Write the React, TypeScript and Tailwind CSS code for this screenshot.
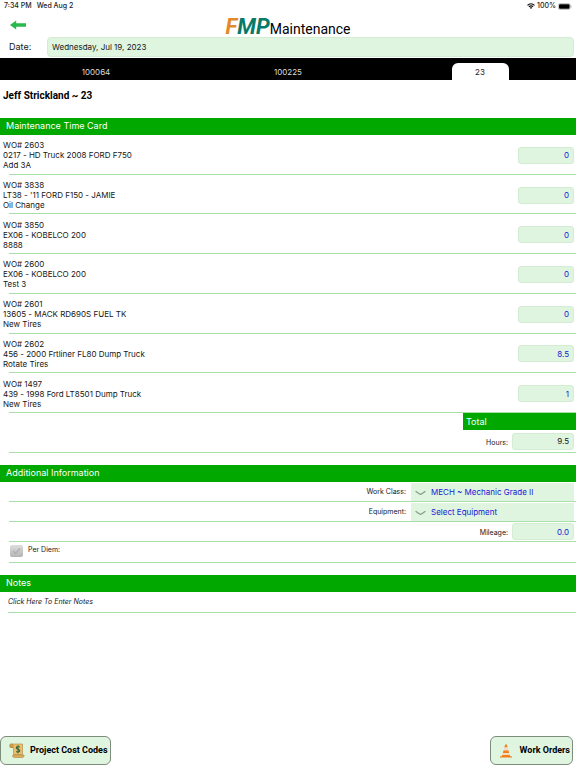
import { useState } from "react";
import type { ReactNode } from "react";

interface WorkOrder {
  id: string;
  equipment: string;
  task: string;
  hours: string;
}

const WORK_ORDERS: WorkOrder[] = [
  { id: "2603", equipment: "0217 - HD Truck 2008 FORD F750", task: "Add 3A", hours: "0" },
  { id: "3838", equipment: "LT38 - '11 FORD F150 - JAMIE", task: "Oil Change", hours: "0" },
  { id: "3850", equipment: "EX06 - KOBELCO 200", task: "8888", hours: "0" },
  { id: "2600", equipment: "EX06 - KOBELCO 200", task: "Test 3", hours: "0" },
  { id: "2601", equipment: "13605 - MACK RD690S FUEL TK", task: "New Tires", hours: "0" },
  { id: "2602", equipment: "456 - 2000 Frtliner FL80 Dump Truck", task: "Rotate Tires", hours: "8.5" },
  { id: "1497", equipment: "439 - 1998 Ford LT8501 Dump Truck", task: "New Tires", hours: "1" },
];

const TABS = ["100064", "100225", "23"];

function StatusBar() {
  return (
    <div className="flex h-3 items-center justify-between px-1 text-[7px] font-medium text-[#222]">
      <div className="flex gap-[5px]">
        <span>7:34 PM</span>
        <span>Wed Aug 2</span>
      </div>
      <div className="flex items-center gap-[2px]">
        <svg width="8" height="6" viewBox="0 0 16 12" fill="none" stroke="#111" strokeWidth="2.4">
          <path d="M1 4.6C5 .6 11 .6 15 4.6M3.8 7.6c2.4-2.4 6-2.4 8.4 0" />
          <path d="M8 12 5.6 9.4c1.4-1.2 3.4-1.2 4.8 0z" fill="#111" stroke="none" />
        </svg>
        <span>100%</span>
        <svg width="14" height="7" viewBox="0 0 15 7">
          <rect x=".4" y=".4" width="12.7" height="6.2" rx="1.8" fill="none" stroke="#999" strokeWidth=".7" />
          <rect x="1.1" y="1.1" width="11.3" height="4.8" rx="1.1" fill="#000" />
          <path d="M13.8 2.4v2.2c.9-.3.9-1.9 0-2.2z" fill="#888" />
        </svg>
      </div>
    </div>
  );
}

function SectionBar({ children }: { children: ReactNode }) {
  return (
    <h2 className="h-[17px] bg-[#00a800] pl-[6px] text-[9px] leading-[15px] text-white">{children}</h2>
  );
}

interface NumberFieldProps {
  id: string;
  value: string;
  className: string;
  onChange?: (value: string) => void;
}

function NumberField({ id, value, className, onChange }: NumberFieldProps) {
  return (
    <input
      id={id}
      type="text"
      inputMode="decimal"
      value={value}
      readOnly={!onChange}
      onChange={(e) => onChange?.(e.target.value)}
      className={`h-[17px] rounded-[3px] border border-[#d3ecd3] bg-[#e0f5e0] pr-1 text-right text-[8px] ${className}`}
    />
  );
}

function PickerRow({ id, label, options }: { id: string; label: string; options: string[] }) {
  return (
    <div className="ml-[9px] flex h-5 items-center justify-end border-b border-[#a9dfa9] pr-[2px]">
      <label htmlFor={id} className="pr-[5px] pt-[2px] text-[7px]">
        {label}
      </label>
      <div className="relative w-[163px]">
        <select
          id={id}
          className="block h-[18px] w-full appearance-none bg-[#e0f5e0] pl-5 text-[8px] text-[#1818d8]"
        >
          {options.map((option) => (
            <option key={option}>{option}</option>
          ))}
        </select>
        <svg
          className="pointer-events-none absolute left-1 top-[7px]"
          width="11"
          height="6"
          viewBox="0 0 11 6"
          fill="none"
          stroke="#8a9d8a"
          strokeWidth="1.4"
        >
          <path d="M.6 1.2 4.6 4q.9.6 1.8 0l4-2.8" />
        </svg>
      </div>
    </div>
  );
}

function ScrollIcon() {
  return (
    <svg width="16" height="15" viewBox="0 0 32 30" stroke="#a8844a" strokeWidth="1.2">
      <path d="M4 2h23v21H9V9H3C1 6 1 2 4 2z" fill="#edc067" />
      <path d="M2.5 9H8V5C7 1 2 1 2 5c0 2 0 3 .5 4z" fill="#d6a047" />
      <path d="M9 24h21c1 3-1 5-4 5H11c-3 0-4-2-4-4z" fill="#e2ae50" />
      <path
        d="M21.5 8.500c-2-2.200-7-1.800-7 1.300s7 2.300 7 5.500-5 3.500-7 1.400M18 4.500v16"
        fill="none"
        stroke="#2f6440"
        strokeWidth="2.2"
      />
    </svg>
  );
}

function ConeIcon() {
  return (
    <svg width="12" height="14" viewBox="0 0 24 28" fill="#f0811c">
      <path d="M10.3 1h3.4l1.6 6H8.7zM7.2 12.5h9.6l1.6 5.5H5.6zM4.6 21.5h14.8l1 3H24V27H0v-2.5h3.6z" />
      <path d="M8.7 7h6.6l1.5 5.5H7.2zM5.6 18h12.8l1 3.5H4.6z" fill="#f3ddc4" />
    </svg>
  );
}

export default function App() {
  const [activeTab, setActiveTab] = useState("23");
  const [hours, setHours] = useState(WORK_ORDERS.map((order) => order.hours));
  const [mileage, setMileage] = useState("0.0");
  const [perDiem, setPerDiem] = useState(false);

  const total = hours.reduce((sum, value) => sum + (Number(value) || 0), 0);

  return (
    <div className="flex min-h-screen flex-col bg-white font-['Inter',sans-serif] text-[#161616]">
      <StatusBar />

      <header className="grid h-[25px] grid-cols-[1fr_auto_1fr] items-center">
        <button type="button" aria-label="Back" className="mb-1 ml-[10px] justify-self-start">
          <svg width="16" height="10" viewBox="0 0 16 10" className="block">
            <path d="M0 5 6.2.6v2.7H16v3.4H6.2v2.7z" fill="#28b84c" />
          </svg>
        </button>
        <div className="flex items-baseline whitespace-nowrap pt-[3px] font-['Roboto',sans-serif] leading-6">
          <span className="text-[22px] font-bold italic text-[#087a68]">
            <span className="text-[#e28a2b]">F</span>MP
          </span>
          <span className="text-[14px] text-black">Maintenance</span>
        </div>
      </header>

      <div className="flex items-center pb-px pr-[2px]">
        <label htmlFor="date" className="w-[47px] shrink-0 pl-[9px] text-[9px]">
          Date:
        </label>
        <input
          id="date"
          type="text"
          defaultValue="Wednesday, Jul 19, 2023"
          className="h-5 min-w-0 flex-1 rounded-[4px] border border-[#d3ecd3] bg-[#e0f5e0] px-1 text-[8px]"
        />
      </div>

      <nav className="grid grid-cols-3 bg-black pt-[5px]">
        {TABS.map((tab) => (
          <button
            key={tab}
            type="button"
            onClick={() => setActiveTab(tab)}
            className={`h-[17px] w-[57px] justify-self-center rounded-t-[6px] text-[8px] ${
              tab === activeTab ? "bg-white text-[#222]" : "text-[#ddd]"
            }`}
          >
            {tab}
          </button>
        ))}
      </nav>

      <main>
        <h1 className="pb-[15px] pl-[3px] pt-[9px] font-['Roboto',sans-serif] text-[10px] font-bold leading-[14px] text-black">
          Jeff Strickland ~ 23
        </h1>

        <SectionBar>Maintenance Time Card</SectionBar>
        <ul className="grid min-h-[278px] auto-rows-fr">
          {WORK_ORDERS.map((order, i) => (
            <li key={order.id} className="flex flex-col">
              <div className="flex flex-1 items-center justify-between pl-[3px] pr-[2px] pt-[2px]">
                <label htmlFor={`hours-${order.id}`} className="text-[8px] leading-[10px]">
                  WO# {order.id}
                  <br />
                  {order.equipment}
                  <br />
                  {order.task}
                </label>
                <NumberField
                  id={`hours-${order.id}`}
                  value={hours[i]}
                  onChange={(value) => setHours(hours.map((h, n) => (n === i ? value : h)))}
                  className="w-14 text-[#1818d8]"
                />
              </div>
              <div className="ml-[9px] border-b border-[#a9dfa9]" />
            </li>
          ))}
        </ul>

        <h3 className="ml-auto h-[17px] w-[113px] bg-[#00a800] pl-[3px] text-[9px] leading-[17px] text-white">
          Total
        </h3>
        <div className="mb-3 ml-[9px] flex h-[23px] items-center justify-end gap-1 border-b border-[#a9dfa9] pr-[2px]">
          <label htmlFor="total-hours" className="pt-1 text-[7px]">
            Hours:
          </label>
          <NumberField id="total-hours" value={String(total)} className="w-[62px]" />
        </div>

        <SectionBar>Additional Information</SectionBar>
        <div className="mb-3">
          <PickerRow id="work-class" label="Work Class:" options={["MECH ~ Mechanic Grade II"]} />
          <PickerRow id="equipment" label="Equipment:" options={["Select Equipment"]} />
          <div className="ml-[9px] flex h-5 items-center justify-end gap-1 border-b border-[#a9dfa9] pr-[2px]">
            <label htmlFor="mileage" className="pt-1 text-[7px]">
              Mileage:
            </label>
            <NumberField id="mileage" value={mileage} onChange={setMileage} className="w-[62px] text-[#1818d8]" />
          </div>
          <div className="ml-[9px] flex h-[21px] items-center border-b border-[#a9dfa9] pb-[3px]">
            <label className="flex items-center gap-[5px] text-[7px]">
              <span className="relative">
                <input
                  type="checkbox"
                  checked={perDiem}
                  onChange={(e) => setPerDiem(e.target.checked)}
                  className="ml-px block h-3 w-[13px] appearance-none rounded-[2px] bg-linear-to-b from-[#dedede] to-[#b4b4b4] checked:from-[#8fd48f] checked:to-[#4fae4f]"
                />
                <svg
                  className="pointer-events-none absolute left-[3px] top-[2px]"
                  width="9"
                  height="8"
                  viewBox="0 0 9 8"
                  fill="none"
                  stroke="#b0b0b0"
                  strokeWidth="1.5"
                >
                  <path d="m1 4 2.5 2.5L8 1.5" />
                </svg>
              </span>
              Per Diem:
            </label>
          </div>
        </div>

        <SectionBar>Notes</SectionBar>
        <div className="ml-2 border-b border-[#a9dfa9]">
          <input
            type="text"
            aria-label="Notes"
            placeholder="Click Here To Enter Notes"
            className="block h-5 w-full pb-px text-[7px] italic placeholder:text-[#161616]"
          />
        </div>
      </main>

      <footer className="mt-auto flex justify-between pb-[3px] pr-[3px] pt-4 font-['Roboto',sans-serif] text-[9px] font-bold text-black">
        <button
          type="button"
          className="flex h-[29px] items-center gap-[5px] rounded-[6px] border border-[#7d8c7d] bg-[#e0f5e0] pl-2 pr-[2px]"
        >
          <ScrollIcon />
          Project Cost Codes
        </button>
        <button
          type="button"
          className="flex h-[29px] items-center gap-2 rounded-[6px] border border-[#7d8c7d] bg-[#e0f5e0] pl-[9px] pr-[2px]"
        >
          <ConeIcon />
          Work Orders
        </button>
      </footer>
    </div>
  );
}
